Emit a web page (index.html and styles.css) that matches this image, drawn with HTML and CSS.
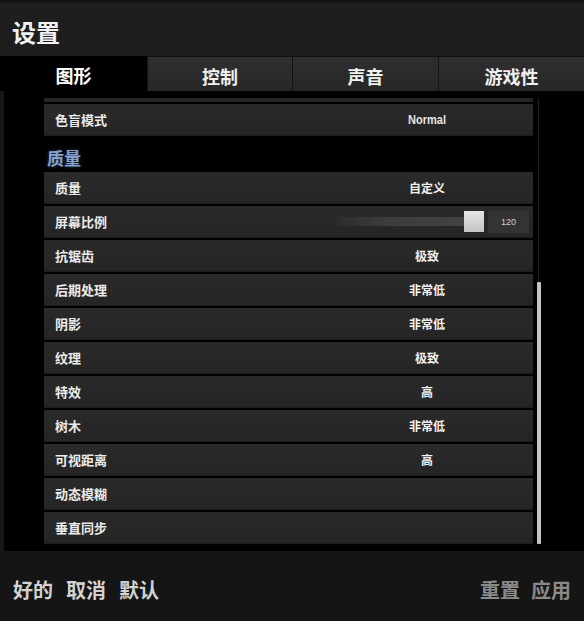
FILE: index.html
```html
<!DOCTYPE html>
<html lang="zh-CN">
<head>
<meta charset="utf-8">
<title>设置</title>
<link rel="stylesheet" href="styles.css">
</head>
<body>
<div class="app">
  <header class="titlebar"><h1 class="title">设置</h1></header>
  <nav class="tabs">
    <div class="tab active">图形</div>
    <div class="tab">控制</div>
    <div class="tab">声音</div>
    <div class="tab">游戏性</div>
  </nav>
  <main class="main">
    <div class="list">
      <div class="partial"></div>
      <div class="row"><span class="label">色盲模式</span><span class="value latin">Normal</span></div>
      <div class="section">质量</div>
      <div class="row"><span class="label">质量</span><span class="value">自定义</span></div>
      <div class="row slider-row">
        <span class="label">屏幕比例</span>
        <div class="slider">
          <div class="track"></div>
          <div class="thumb"></div>
          <div class="valbox">120</div>
        </div>
      </div>
      <div class="row"><span class="label">抗锯齿</span><span class="value">极致</span></div>
      <div class="row"><span class="label">后期处理</span><span class="value">非常低</span></div>
      <div class="row"><span class="label">阴影</span><span class="value">非常低</span></div>
      <div class="row"><span class="label">纹理</span><span class="value">极致</span></div>
      <div class="row"><span class="label">特效</span><span class="value">高</span></div>
      <div class="row"><span class="label">树木</span><span class="value">非常低</span></div>
      <div class="row"><span class="label">可视距离</span><span class="value">高</span></div>
      <div class="row"><span class="label">动态模糊</span><span class="value"></span></div>
      <div class="row"><span class="label">垂直同步</span><span class="value"></span></div>
    </div>
    <div class="scrolltrack"><div class="scrollthumb"></div></div>
  </main>
  <footer class="footer">
    <div class="actions">
      <span class="btn">好的</span>
      <span class="btn">取消</span>
      <span class="btn">默认</span>
    </div>
    <div class="actions right">
      <span class="btn dim">重置</span>
      <span class="btn dim">应用</span>
    </div>
  </footer>
</div>
</body>
</html>
```
FILE: styles.css
```css
* { box-sizing: border-box; }
html, body {
  margin: 0;
  padding: 0;
  background: #000;
}
body {
  width: 584px;
  height: 621px;
  overflow: hidden;
  font-family: "Noto Sans CJK SC", "Noto Sans", sans-serif;
  font-weight: 700;
  color: #ececec;
}
.app {
  display: flex;
  flex-direction: column;
  height: 621px;
}
.titlebar {
  height: 56px;
  flex: none;
  display: flex;
  align-items: center;
  padding: 8px 0 0 12px;
  background: linear-gradient(#141414 0, #141414 3px, #1e1e1e 3px, #1d1d1d 100%);
}
.title {
  margin: 0;
  font-size: 24px;
  line-height: 1;
  font-weight: 700;
  color: #f2f2f2;
  letter-spacing: 0px;
}
.tabs {
  height: 35px;
  flex: none;
  display: grid;
  grid-template-columns: 147px 145px 146px 146px;
  background: #000;
}
.tab {
  display: flex;
  align-items: center;
  justify-content: center;
  padding-top: 3px;
  font-size: 18px;
  line-height: 1;
  color: #f0f0f0;
  background: linear-gradient(#2f2f2f, #272727);
  border-left: 1px solid #141414;
  border-top: 1px solid #0e0e0e;
}
.tab.active {
  background: #000;
  border: 0;
  color: #fff;
}
.main {
  flex: 1;
  display: flex;
  gap: 4px;
  padding-left: 40px;
  border-left: 4px solid #161616;
  overflow: hidden;
}
.list {
  width: 489px;
  display: flex;
  flex-direction: column;
  gap: 2px;
  padding-top: 7px;
}
.partial {
  height: 4px;
  background: #262626;
  flex: none;
}
.row {
  height: 32px;
  flex: none;
  display: grid;
  grid-template-columns: 1fr 100px;
  align-items: center;
  padding: 0 56px 0 11px;
  background: linear-gradient(#2a2a2a, #252525);
  border-bottom: 1px solid #1b1b1b;
}
.label {
  font-size: 13px;
  line-height: 1;
  color: #ebebeb;
}
.value {
  font-size: 12px;
  line-height: 1;
  text-align: center;
  color: #f2f2f2;
}
.value.latin {
  font-family: "Liberation Sans Narrow", "Liberation Sans", sans-serif;
  font-size: 13px;
  transform: scaleX(0.85);
  color: #e4e4e4;
}
.section {
  height: 32px;
  flex: none;
  display: flex;
  align-items: center;
  padding: 6px 0 0 3px;
  font-size: 17px;
  line-height: 1;
  color: #86a2cc;
  text-shadow: 0 0 4px rgba(90, 130, 200, 0.45);
}
.slider-row {
  display: flex;
  justify-content: space-between;
  padding-right: 4px;
}
.slider {
  display: flex;
  align-items: center;
}
.track {
  width: 129px;
  height: 9px;
  background: linear-gradient(to right, #2b2b2b, #3c3c3c 40%, #424242);
}
.thumb {
  width: 20px;
  height: 21px;
  background: linear-gradient(#e6e6e6, #c4c4c4);
}
.valbox {
  width: 41px;
  height: 22px;
  margin-left: 4px;
  background: #333;
  display: flex;
  align-items: center;
  justify-content: center;
  font-family: "Liberation Sans Narrow", "Liberation Sans", sans-serif;
  font-weight: 400;
  font-size: 9px;
  color: #d0d0d0;
}
.scrolltrack {
  width: 4px;
  height: 446px;
  margin-top: 7px;
  flex: none;
  display: flex;
  flex-direction: column;
  background: linear-gradient(to right, transparent 1px, #1f1f1f 1px, #1f1f1f 2px, transparent 2px);
}
.scrollthumb {
  margin-top: 184px;
  height: 262px;
  background: #c4c4c4;
  border-radius: 1px;
}
.footer {
  height: 70px;
  flex: none;
  display: flex;
  align-items: center;
  justify-content: space-between;
  padding: 8px 13px 0 13px;
  background: #151515;
}
.actions {
  display: flex;
  gap: 13px;
}
.btn {
  font-size: 20px;
  line-height: 1;
  color: #d2d2d2;
}
.btn.dim {
  color: #8a8a8a;
}
.actions.right {
  gap: 11px;
}
```
